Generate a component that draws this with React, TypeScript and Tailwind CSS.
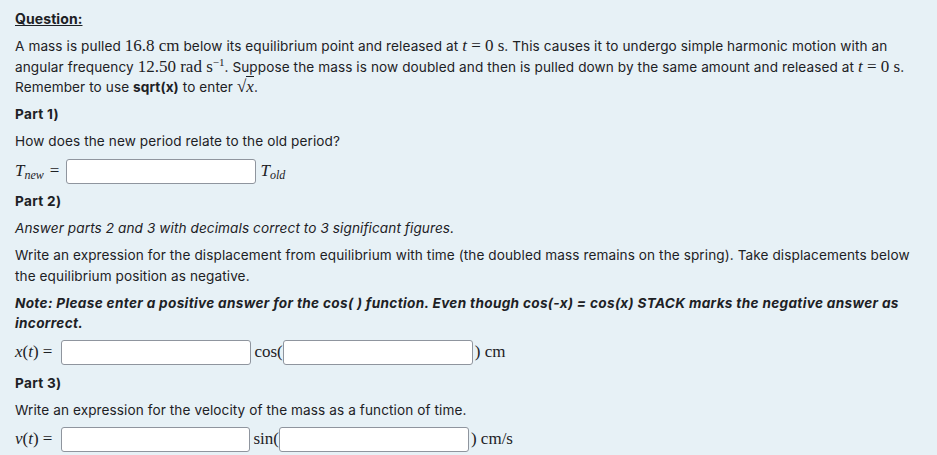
const sans = "font-['Inter','Noto_Sans',sans-serif]";
const serif = "font-['Liberation_Serif','DejaVu_Serif',serif]";

function M({ children }: { children: React.ReactNode }) {
  return <span className={`${serif} text-[17px] tracking-normal`}>{children}</span>;
}

function Box({ w = "w-[190px]" }: { w?: string }) {
  return (
    <input
      type="text"
      className={`${w} h-[25px] bg-white border border-[#8f959e] rounded-[3px] px-1 outline-none`}
    />
  );
}

export default function App() {
  return (
    <div
      className={`${sans} bg-[#e7f1f6] text-[#1d2125] text-[13.6px] leading-[20.5px] tracking-[0.09px] w-[937px] h-[455px] overflow-hidden px-[15px] pt-[9px]`}
    >
      <div className="flex flex-col gap-[6.5px]">
        <h4 className="font-bold underline text-[14px]">Question:</h4>

        <p>
          A mass is pulled <M>16.8 cm</M> below its equilibrium point and released at{" "}
          <M>
            <i>t</i> = 0 s
          </M>
          . This causes it to undergo simple harmonic motion with an angular frequency{" "}
          <M>
            12.50 rad s<sup className="text-[11px]">−1</sup>
          </M>
          . Suppose the mass is now doubled and then is pulled down by the same amount and released at{" "}
          <M>
            <i>t</i> = 0 s
          </M>
          .
          <br />
          Remember to use <b>sqrt(x)</b> to enter{" "}
          <M>
            √<span className="border-t border-[#1d2125] italic">x</span>
          </M>
          .
        </p>

        <p className="font-bold tracking-[0.3px]">Part 1)</p>
        <p>How does the new period relate to the old period?</p>

        <div className="flex items-center mt-[0.5px]">
          <M>
            <i>T</i>
            <sub className="italic text-[12px]">new</sub>
            <span className="ml-[6px]">=</span>
          </M>
          <span className="w-[7px]" />
          <Box />
          <span className="ml-[4px]">
            <M>
              <i>T</i>
              <sub className="italic text-[12px]">old</sub>
            </M>
          </span>
        </div>

        <p className="font-bold tracking-[0.3px] mt-[1px]">Part 2)</p>
        <p className="italic">Answer parts 2 and 3 with decimals correct to 3 significant figures.</p>
        <p>
          Write an expression for the displacement from equilibrium with time (the doubled mass remains on
          the spring). Take displacements below the equilibrium position as negative.
        </p>
        <p className="font-bold italic tracking-[0.33px]">
          Note: Please enter a positive answer for the cos( ) function. Even though cos(-x) = cos(x) STACK
          marks the negative answer as incorrect.
        </p>

        <div className="flex items-center">
          <M>
            <i>x</i>(<i>t</i>) ={" "}
          </M>
          <span className="w-[9px]" />
          <Box />
          <span className="ml-[3px]">
            <M>cos(</M>
          </span>
          <Box />
          <span className="ml-[2px]">
            <M>) cm</M>
          </span>
        </div>

        <p className="font-bold tracking-[0.3px] mt-[1px]">Part 3)</p>
        <p>Write an expression for the velocity of the mass as a function of time.</p>

        <div className="flex items-center">
          <M>
            <i>v</i>(<i>t</i>) ={" "}
          </M>
          <span className="w-[9px]" />
          <Box w="w-[189px]" />
          <span className="ml-[3px]">
            <M>sin(</M>
          </span>
          <Box />
          <span className="ml-[2px]">
            <M>) cm/s</M>
          </span>
        </div>
      </div>
    </div>
  );
}
